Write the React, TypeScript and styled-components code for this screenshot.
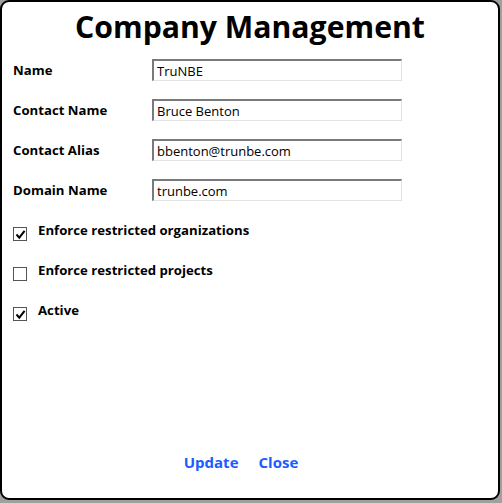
import styled, { createGlobalStyle } from 'styled-components';

const GlobalStyle = createGlobalStyle`
  html, body {
    margin: 0;
    padding: 0;
    background: #a0a0a0;
  }
  body {
    font-family: 'Open Sans', 'Noto Sans', sans-serif;
  }
`;

const fields = [
  { label: 'Name', value: 'TruNBE' },
  { label: 'Contact Name', value: 'Bruce Benton' },
  { label: 'Contact Alias', value: 'bbenton@trunbe.com' },
  { label: 'Domain Name', value: 'trunbe.com' },
];

const options = [
  { label: 'Enforce restricted organizations', checked: true },
  { label: 'Enforce restricted projects', checked: false },
  { label: 'Active', checked: true },
];

const App = () => {
  return (
    <>
      <GlobalStyle />
      <Dialog>
        <Title>Company Management</Title>
        <Form>
          {fields.map((f) => (
            <FieldRow key={f.label}>
              <Label>{f.label}</Label>
              <TextInput defaultValue={f.value} />
            </FieldRow>
          ))}
          {options.map((o) => (
            <CheckRow key={o.label}>
              <Box>
                {o.checked && (
                  <svg width="11" height="11" viewBox="0 0 11 11">
                    <path d="M1.5 5.5 L4.3 8.6 L9.6 1.8" fill="none" stroke="#000" strokeWidth="2" />
                  </svg>
                )}
              </Box>
              <CheckLabel>{o.label}</CheckLabel>
            </CheckRow>
          ))}
        </Form>
        <Actions>
          <LinkButton>Update</LinkButton>
          <LinkButton>Close</LinkButton>
        </Actions>
      </Dialog>
    </>
  );
};

const Dialog = styled.div`
  box-sizing: border-box;
  width: 500px;
  height: 500px;
  background: #fff;
  border: 2px solid #000;
  border-radius: 9px;
  display: flex;
  flex-direction: column;
`;

const Title = styled.h1`
  margin: 4px 0 0;
  text-align: center;
  font-size: 30.2px;
  font-weight: 700;
  line-height: 42px;
  color: #000;
`;

const Form = styled.div`
  flex: 1;
  display: flex;
  flex-direction: column;
  padding: 2px 11px 0;
`;

const FieldRow = styled.div`
  height: 40px;
  display: flex;
  align-items: center;
`;

const Label = styled.span`
  font-size: 13.2px;
  font-weight: 700;
  color: #000;
  line-height: 20px;
  width: 139px;
  flex-shrink: 0;
`;

const CheckLabel = styled(Label)`
  width: auto;
`;

const TextInput = styled.input`
  box-sizing: border-box;
  width: 250px;
  height: 22px;
  padding: 1px 3px 0;
  border: 1px solid #e3e3e3;
  border-top: 2px solid #7a7a7a;
  border-left: 2px solid #7a7a7a;
  font-family: 'Open Sans', 'Noto Sans', sans-serif;
  font-size: 13px;
  color: #000;
  outline: none;
`;

const CheckRow = styled.div`
  height: 40px;
  display: flex;
  align-items: center;
  gap: 11px;
`;

const Box = styled.span`
  box-sizing: border-box;
  width: 14px;
  height: 14px;
  margin-top: 8px;
  border: 1px solid #555;
  background: #fff;
  display: flex;
  align-items: center;
  justify-content: center;
`;

const Actions = styled.div`
  display: flex;
  justify-content: center;
  gap: 20px;
  padding: 0 18px 26px 0;
`;

const LinkButton = styled.span`
  font-size: 15px;
  font-weight: 700;
  color: #1a5cff;
  cursor: pointer;
`;

export default App;
